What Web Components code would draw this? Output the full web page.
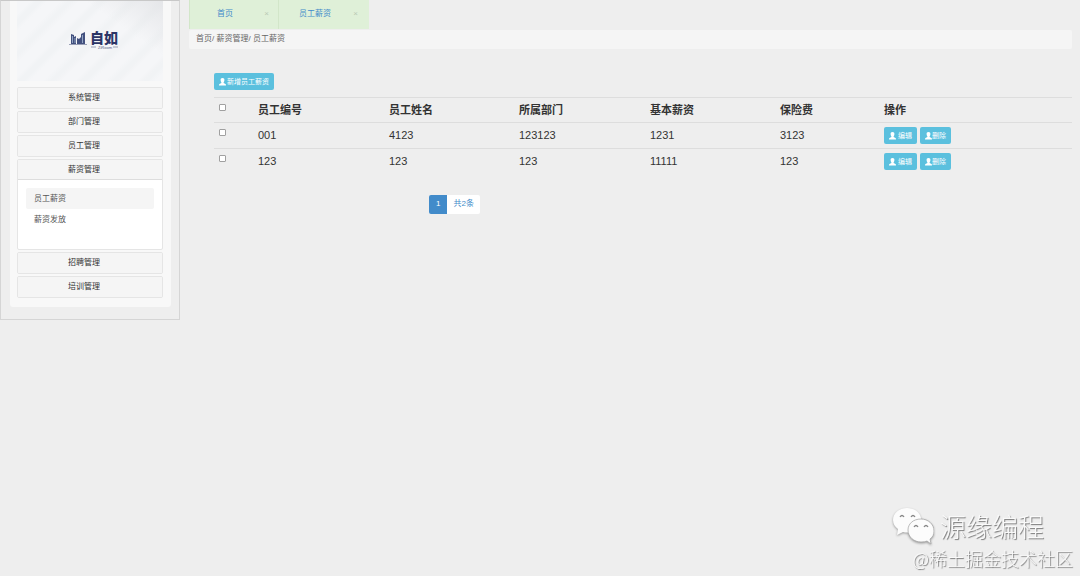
<!DOCTYPE html>
<html lang="zh-CN">
<head>
<meta charset="utf-8">
<title>员工薪资</title>
<style>
html{height:100%}
body{margin:0;min-height:100%;background:#eee;color:#333;font-family:"Liberation Sans","Noto Sans CJK SC",sans-serif;font-size:8px;line-height:12px}
</style>
</head>
<body>
<salary-app></salary-app>
<script>
function define(name, html, setup) {
  const template = document.createElement('template');
  template.innerHTML = html;
  customElements.define(name, class extends HTMLElement {
    constructor() {
      super();
      this.attachShadow({ mode: 'open' }).append(template.content.cloneNode(true));
    }
    connectedCallback() { if (setup) setup(this, this.shadowRoot); }
  });
}

define('brand-banner', `
<style>
:host{display:flex;align-items:center;justify-content:center;height:80px;box-sizing:border-box;padding-left:8px;
background:linear-gradient(215deg,rgba(226,227,230,.8),rgba(246,247,249,0) 30%),repeating-linear-gradient(135deg,#f5f6f8 0 9px,#f1f3f5 14px 17px,#f5f6f8 22px)}
svg{display:block;margin-bottom:4px}
.word{font-family:"Noto Sans CJK SC",sans-serif;font-weight:900;fill:#2c3566}
</style>
<svg width="50" height="24" viewBox="0 0 50 24" role="img" aria-label="自如">
<path d="M2 17V7L5 8V10L7 9V17H8V11L10 12L12 10V7L16 5V17Z" fill="#43517f"/>
<path d="M3.500 9V16M6 11V16M13.500 8V16" stroke="#a9bdd5" stroke-width=".8"/>
<path d="M0 17.500H18M22 20H27M44 20H49" stroke="#737b9b" stroke-width=".7"/>
<text class="word" x="21" y="16" font-size="14">自如</text>
<text x="29" y="22" font-family="Liberation Sans,sans-serif" font-size="4" fill="#5a628a">ZiRoom</text>
</svg>`);

define('menu-group', `
<style>
:host{display:block;box-sizing:border-box;border:1px solid #e5e5e5;border-radius:2px;background:#fff;overflow:hidden}
button{display:block;width:100%;height:20px;padding:0 12px 0 0;border:0;background:#f5f5f5;color:#333;font:inherit;text-align:center}
nav{border-top:1px solid #ddd;padding:8px 8px 18px}
nav[hidden]{display:none}
:host([open]) button{height:19px}
</style>
<button type="button"></button><nav><slot></slot></nav>`, (host, root) => {
  const button = root.querySelector('button'), nav = root.querySelector('nav');
  button.textContent = host.getAttribute('label');
  nav.hidden = !host.hasAttribute('open');
  button.setAttribute('aria-expanded', String(!nav.hidden));
  button.onclick = () => {
    nav.hidden = !nav.hidden;
    button.setAttribute('aria-expanded', String(!nav.hidden));
  };
});

define('menu-link', `
<style>
:host{display:block}
a{display:block;padding:5px 8px;line-height:12px;color:#555;text-decoration:none;border-radius:2px}
:host([active]) a{background:#f5f5f5;padding-bottom:4px}
</style><a href="#"><slot></slot></a>`);

define('side-bar', `
<style>
:host{display:block;box-sizing:border-box;width:180px;flex:none;padding:0 8px 12px 9px;border:1px solid #d5d5d5;border-top-color:#c8c8c8}
.panel{background:#f8f8f8;padding:0 8px 9px 7px;border-radius:0 0 3px 3px}
.groups{display:grid;gap:2px;padding-top:6px}
</style>
<div class="panel"><brand-banner></brand-banner>
<div class="groups">
<menu-group label="系统管理"></menu-group>
<menu-group label="部门管理"></menu-group>
<menu-group label="员工管理"></menu-group>
<menu-group label="薪资管理" open><menu-link active>员工薪资</menu-link><menu-link>薪资发放</menu-link></menu-group>
<menu-group label="招聘管理"></menu-group>
<menu-group label="培训管理"></menu-group>
</div></div>`);

define('page-tab', `
<style>
:host{display:flex;align-items:center;justify-content:space-between;box-sizing:border-box;height:29px;padding:0 8px 2px 19px;min-width:89px;background:#dff0d8;border-left:1px solid #d2e6c9}
a{color:#428bca;text-decoration:none;padding-left:8px}
:host([wide]) a{padding-left:0}
:host([wide]){min-width:91px;padding-left:20px;padding-right:10px}
button{width:7px;height:12px;padding:0;border:0;background:none;color:#b9c9b4;font:inherit;line-height:12px}
</style><a href="#"><slot></slot></a><button type="button" aria-label="关闭">×</button>`);

define('bread-crumb', `
<style>
:host{display:block;background:#f5f5f5;padding:3px 7px 4px;line-height:12px;color:#666;border-radius:2px}
a{color:inherit;text-decoration:none}
</style><nav><a href="#">首页</a>/ <a href="#">薪资管理</a>/ <span>员工薪资</span></nav>`);

define('info-button', `
<style>
:host{display:inline-block;vertical-align:top}
button{display:flex;align-items:center;gap:1px;height:17px;padding:0 5px;border:0;border-radius:2px;background:#5bc0de;color:#fff;font:inherit;font-size:7px;line-height:12px;white-space:nowrap}
:host([tight]) button{gap:0}
:host([loose]) button{gap:2px}
svg{display:block}
</style><button type="button"><svg width="7" height="8" viewBox="0 0 14 16" fill="#fff" aria-hidden="true"><path d="M7 0C9.800 0 11 1.700 10.800 4.500C10.700 6.500 10 8 9.300 8.700V10L13 12Q14 12.600 14 15H0Q0 12.600 1 12L4.700 10V8.700C4 8 3.300 6.500 3.200 4.500C3 1.700 4.200 0 7 0Z"/></svg><slot></slot></button>`);

define('salary-table', `
<style>
:host{display:block}
table{width:100%;table-layout:fixed;border-collapse:collapse;font-size:11px;line-height:16px}
.pick{width:39px}.field{width:131px}.amount{width:130px}.fee{width:104px}
th,td{height:26px;box-sizing:border-box;padding:4px 5px;border-top:1px solid #ddd;text-align:left;vertical-align:top}
thead th{height:25px}
input{display:block;appearance:none;box-sizing:border-box;width:7px;height:7px;margin:2px 0 0;border:1px solid #a0a0a0;border-radius:1px;background:#fff}
input:checked{background:#428bca}
.acts{display:flex;gap:3px}
</style>
<table>
<colgroup><col class="pick"><col class="field"><col class="amount"><col class="field"><col class="amount"><col class="fee"><col></colgroup>
<thead><tr><th><input type="checkbox" aria-label="全选"></th><th>员工编号</th><th>员工姓名</th><th>所属部门</th><th>基本薪资</th><th>保险费</th><th>操作</th></tr></thead>
<tbody></tbody></table>`, (host, root) => {
  const rows = [['001', '4123', '123123', '1231', '3123'], ['123', '123', '123', '11111', '123']];
  root.querySelector('tbody').innerHTML = rows.map(row =>
    `<tr><td><input type="checkbox" aria-label="选择 ${row[0]}"></td>${row.map(v => `<td>${v}</td>`).join('')}<td><div class="acts"><info-button loose>编辑</info-button><info-button tight>删除</info-button></div></td></tr>`).join('');
});

define('page-nav', `
<style>
:host{display:flex}
a{padding:3px 6px 4px;line-height:12px;background:#fff;color:#428bca;text-decoration:none;border-radius:0 2px 2px 0}
a[aria-current]{padding:3px 7px 4px;background:#428bca;color:#fff;border-radius:2px 0 0 2px}
</style><a href="#" aria-current="page">1</a><a href="#">共2条</a>`);

define('water-mark', `
<style>
:host{position:fixed;right:7px;bottom:5px;display:grid;justify-items:end;color:#fafafa;pointer-events:none;font-family:"Noto Sans CJK SC",sans-serif;text-shadow:1px 1px 1px #777}
.account{display:flex;align-items:center;gap:6px;padding-right:29px;font-size:26px;line-height:34px;font-weight:300}
.site{font-size:18px;line-height:26px;font-weight:300}
svg{display:block;filter:drop-shadow(0 1px 1px #999)}
</style>
<div class="account"><svg width="42" height="38" viewBox="0 0 42 38" aria-hidden="true">
<path d="M15 1C7 1 1 6 1 13C1 17 3 20 6 22L5 28L11 25Q15 26 19 25C27 24 30 19 29 11C28 5 22 1 15 1Z" fill="#fcfcfc"/>
<path d="M29 12C21 12 16 17 16 23C16 30 22 35 29 35Q33 35 35 34L39 37L38 32C41 30 42 27 42 24C42 17 36 12 29 12Z" fill="#fcfcfc" stroke="#aaa" stroke-width=".8"/>
<path d="M8 10Q10 7 12 10M19 10Q21 7 23 10M22 20Q24 17 26 20M32 20Q34 17 36 20" fill="none" stroke="#888" stroke-width="1.300"/>
</svg><span>源缘编程</span></div><div class="site">@稀土掘金技术社区</div>`);

define('salary-app', `
<style>
:host{display:flex;align-items:flex-start}
main{flex:1;min-width:0;padding:0 8px 0 9px}
.tabs{display:flex}
bread-crumb{margin-top:1px}
section{padding:24px 0 0 25px}
salary-table{margin-top:7px}
page-nav{margin:20px 0 0 215px}
</style>
<side-bar></side-bar>
<main><div class="tabs"><page-tab>首页</page-tab><page-tab wide>员工薪资</page-tab></div>
<bread-crumb></bread-crumb>
<section><info-button>新增员工薪资</info-button><salary-table></salary-table><page-nav></page-nav></section></main>
<water-mark></water-mark>`);
</script>
</body>
</html>
